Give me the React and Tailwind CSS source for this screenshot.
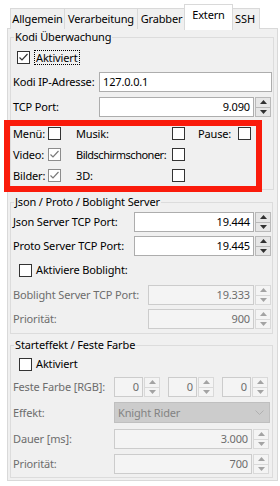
import React from 'react'

const TABS = [
  { label: 'Allgemein', w: 'w-[55px]' },
  { label: 'Verarbeitung', w: 'w-[74px]' },
  { label: 'Grabber', w: 'w-[49px]' },
  { label: 'Extern', w: 'w-[49px]', active: true },
  { label: 'SSH', w: 'w-[30px]' },
]

function Check({ checked, dim }) {
  return (
    <span
      className={
        'inline-flex w-[13px] h-[13px] shrink-0 items-center justify-center border bg-white ' +
        (dim ? 'border-[#8c8c8c]' : 'border-[#333333]')
      }
    >
      {checked && (
        <svg width="11" height="11" viewBox="0 0 11 11">
          <path d="M1.5 5.5 L4 8 L9.5 2" fill="none" stroke={dim ? '#7a7a7a' : '#333333'} strokeWidth="1.2" />
        </svg>
      )}
    </span>
  )
}

function Arrow({ up, disabled }) {
  return (
    <svg width="7" height="4" viewBox="0 0 7 4">
      <path d={up ? 'M0 4 L3.5 0 L7 4 Z' : 'M0 0 L3.5 4 L7 0 Z'} fill={disabled ? '#a3a3a3' : '#303030'} />
    </svg>
  )
}

function Spin({ value, disabled, className = '' }) {
  return (
    <div className={'flex h-[20px] ' + className}>
      <div
        className={
          'flex-1 flex items-center justify-end pr-[3px] border ' +
          (disabled ? 'bg-[#f4f4f4] border-[#cccccc] text-[#6d6d6d]' : 'bg-white border-[#adadad]')
        }
      >
        {value}
      </div>
      <div className="w-[16px] ml-[1px] flex flex-col">
        <div
          className={
            'flex-1 flex items-center justify-center border ' +
            (disabled ? 'bg-[#f4f4f4] border-[#d9d9d9]' : 'bg-[#e6e6e6] border-[#b9b9b9]')
          }
        >
          <Arrow up disabled={disabled} />
        </div>
        <div
          className={
            'flex-1 flex items-center justify-center border border-t-0 ' +
            (disabled ? 'bg-[#f4f4f4] border-[#d9d9d9]' : 'bg-[#e6e6e6] border-[#b9b9b9]')
          }
        >
          <Arrow disabled={disabled} />
        </div>
      </div>
    </div>
  )
}

function Group({ title, className = '', children }) {
  return (
    <fieldset className={'ml-[2px] w-[263px] border border-[#dcdcdc] pl-px pr-px ' + className}>
      <legend className="ml-[2px] px-[1px] leading-[16px]">{title}</legend>
      {children}
    </fieldset>
  )
}

export default function App() {
  return (
    <div className="relative w-[280px] h-[486px] bg-white overflow-hidden font-['Segoe_UI','Noto_Sans',sans-serif] text-[11px] leading-[16px] tracking-[-0.15px] text-black">
      {/* Tab bar */}
      <div className="flex items-end h-[29px] pl-[10px]">
        {TABS.map((t) =>
          t.active ? (
            <div
              key={t.label}
              className={t.w + ' relative z-10 -mx-[2px] h-[26px] mb-[-1px] pb-[6px] flex items-center justify-center bg-white border border-b-0 border-[#d9d9d9]'}
            >
              {t.label}
            </div>
          ) : (
            <div
              key={t.label}
              className={t.w + ' h-[21px] -ml-px first:ml-0 flex items-center justify-center bg-[#f0f0f0] border border-b-0 border-[#d9d9d9]'}
            >
              {t.label}
            </div>
          )
        )}
      </div>

      {/* Pane */}
      <div className="ml-[7px] w-[271px] -mt-px border border-[#d9d9d9] bg-[#f0f0f0] pb-[2px]">
        <Group title="Kodi Überwachung" className="pb-[3px]">
          <div className="mt-[3px] h-[18px] flex items-center pl-[5px] gap-[4px]">
            <Check checked />
            <span className="border border-dotted border-black px-px leading-[13px]">Aktiviert</span>
          </div>
          <div className="mt-[6px] h-[20px] flex items-center pl-px">
            <span className="w-[86px] shrink-0">Kodi IP-Adresse:</span>
            <div className="w-[173px] h-[20px] flex items-center pl-[3px] bg-white border border-[#adadad]">127.0.0.1</div>
          </div>
          <div className="mt-[5px] h-[20px] flex items-center pl-px">
            <span className="w-[86px] shrink-0">TCP Port:</span>
            <Spin value="9.090" className="w-[172px]" />
          </div>
          <div className="mt-[6px] pl-px grid grid-cols-[35px_28px_96px_26px_40px_13px] auto-rows-[21px] items-center">
            <span>Menü:</span>
            <Check />
            <span>Musik:</span>
            <Check />
            <span>Pause:</span>
            <Check />
            <span>Video:</span>
            <Check checked dim />
            <span className="whitespace-nowrap tracking-[-0.5px]">Bildschirmschoner:</span>
            <Check />
            <span />
            <span />
            <span>Bilder:</span>
            <Check checked dim />
            <span>3D:</span>
            <Check />
          </div>
        </Group>

        <Group title="Json / Proto / Boblight Server" className="mt-[4px] pb-[4px]">
          <div className="mt-[2px] h-[20px] flex items-center pl-px">
            <span className="w-[121px] shrink-0">Json Server TCP Port:</span>
            <Spin value="19.444" className="w-[137px]" />
          </div>
          <div className="mt-[4px] h-[20px] flex items-center pl-px">
            <span className="w-[121px] shrink-0">Proto Server TCP Port:</span>
            <Spin value="19.445" className="w-[137px]" />
          </div>
          <div className="mt-[5px] h-[18px] flex items-center pl-[7px] gap-[4px]">
            <Check />
            <span>Aktiviere Boblight:</span>
          </div>
          <div className="mt-[6px] h-[20px] flex items-center pl-px text-[#6d6d6d]">
            <span className="w-[135px] shrink-0">Boblight Server TCP Port:</span>
            <Spin value="19.333" disabled className="w-[123px]" />
          </div>
          <div className="mt-[4px] h-[20px] flex items-center pl-px text-[#6d6d6d]">
            <span className="w-[135px] shrink-0">Priorität:</span>
            <Spin value="900" disabled className="w-[123px]" />
          </div>
        </Group>

        <Group title="Starteffekt / Feste Farbe" className="mt-[3px] pb-[3px]">
          <div className="mt-[2px] h-[18px] flex items-center pl-[7px] gap-[4px]">
            <Check />
            <span>Aktiviert</span>
          </div>
          <div className="mt-[4px] h-[20px] flex items-center pl-px text-[#6d6d6d]">
            <span className="w-[101px] shrink-0">Feste Farbe [RGB]:</span>
            <div className="flex gap-[8px]">
              <Spin value="0" disabled className="w-[46px]" />
              <Spin value="0" disabled className="w-[46px]" />
              <Spin value="0" disabled className="w-[46px]" />
            </div>
          </div>
          <div className="mt-[5px] h-[21px] flex items-center pl-px text-[#6d6d6d]">
            <span className="w-[101px] shrink-0">Effekt:</span>
            <div className="w-[156px] h-[21px] flex items-center justify-between pl-[3px] pr-[5px] bg-[#cccccc] border border-[#bfbfbf] text-[#838383]">
              <span>Knight Rider</span>
              <svg width="9" height="5" viewBox="0 0 9 5">
                <path d="M0.5 0.5 L4.5 4.5 L8.5 0.5" fill="none" stroke="#b0b0b0" strokeWidth="1" />
              </svg>
            </div>
          </div>
          <div className="mt-[6px] h-[20px] flex items-center pl-px text-[#6d6d6d]">
            <span className="w-[101px] shrink-0">Dauer [ms]:</span>
            <Spin value="3.000" disabled className="w-[155px]" />
          </div>
          <div className="mt-[5px] h-[20px] flex items-center pl-px text-[#6d6d6d]">
            <span className="w-[101px] shrink-0">Priorität:</span>
            <Spin value="700" disabled className="w-[155px]" />
          </div>
        </Group>
      </div>

      {/* red annotation frame */}
      <div className="absolute left-[4px] top-[120px] w-[258px] h-[72px] border-[6px] border-[#fa1b0b] pointer-events-none" />
    </div>
  )
}
